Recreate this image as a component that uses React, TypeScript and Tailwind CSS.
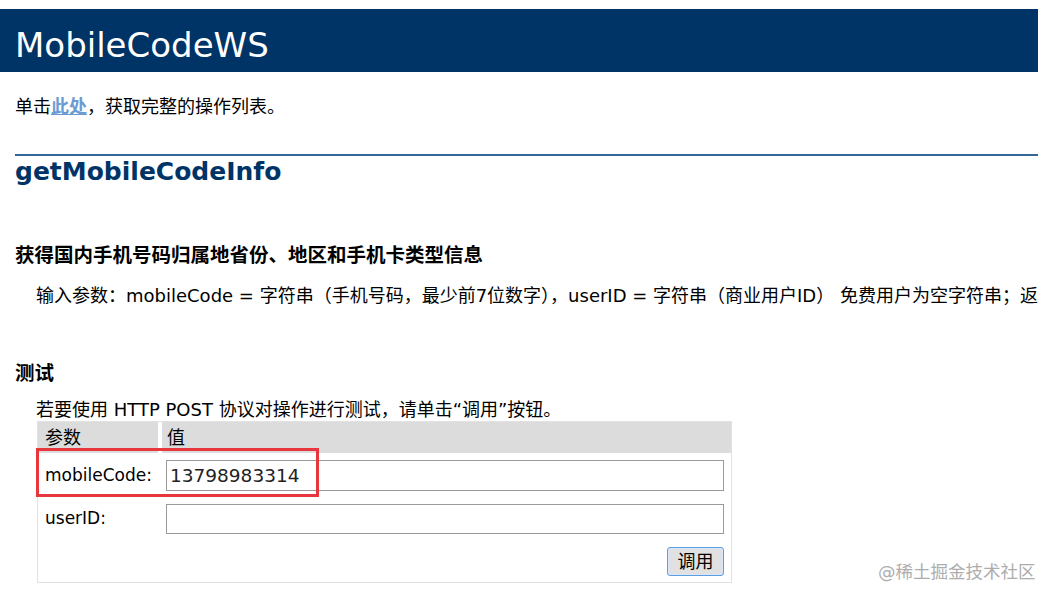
export default function App() {
  return (
    <div className="relative w-[1038px] overflow-hidden bg-white pt-[9px] pb-[19px] font-['DejaVu_Sans','Noto_Sans_CJK_SC',sans-serif] text-black">
      <div className="h-[63px] bg-[#003366] pl-[15px] pt-[19px] text-[34px] leading-[34px] text-white">MobileCodeWS</div>

      <p className="mt-[23px] pl-[15px] text-[18px] leading-[24px]">
        单击<a className="font-bold text-[#6b9bd2] underline">此处</a>，获取完整的操作列表。
      </p>

      <div className="ml-[15px] mt-[35px] h-[2px] bg-[#336699]" />
      <h2 className="mt-[1px] pl-[15px] text-[25px] font-bold leading-[30px] text-[#003366]">getMobileCodeInfo</h2>

      <h3 className="mt-[56px] pl-[15px] text-[19.5px] font-bold leading-[26px]">获得国内手机号码归属地省份、地区和手机卡类型信息</h3>
      <p className="mt-[15px] whitespace-nowrap pl-[36px] text-[18px] leading-[24px]">
        输入参数：mobileCode = 字符串（手机号码，最少前7位数字），userID = 字符串（商业用户ID） 免费用户为空字符串；返回数据：字符串（手机号码：省份 城市 手机卡类型）。
      </p>

      <h3 className="mt-[53px] pl-[15px] text-[19.5px] font-bold leading-[26px]">测试</h3>
      <p className="mt-[12px] pl-[36px] text-[18px] leading-[22px]">若要使用 HTTP POST 协议对操作进行测试，请单击“调用”按钮。</p>

      <div className="relative ml-[37px] w-[695px] border border-[#e2e2e2]">
        <div className="flex h-[31px] gap-[4px] text-[18px]">
          <div className="flex w-[120px] items-center bg-[#dcdcdc] pl-[7px]">参数</div>
          <div className="flex flex-1 items-center bg-[#dcdcdc] pl-[5px]">值</div>
        </div>
        <div className="grid grid-cols-[120px_1fr] items-center gap-x-[4px] gap-y-[13px] pt-[7px] pb-[6px] text-[17px]">
          <div className="pl-[7px]">mobileCode:</div>
          <div className="pl-[4px] pr-[7px]">
            <input
              className="h-[31px] w-full border border-[#9a9a9a] px-[3px] text-[18.5px] text-[#222] outline-none"
              defaultValue="13798983314"
            />
          </div>
          <div className="pl-[7px]">userID:</div>
          <div className="pl-[4px] pr-[7px]">
            <input className="h-[30px] w-full border border-[#9a9a9a] px-[3px] text-[18.5px] outline-none" />
          </div>
          <div />
          <div className="flex justify-end pr-[7px]">
            <button className="h-[29px] w-[57px] rounded-[3px] border border-[#5f9de2] bg-[#e1e1e1] text-[18px] leading-none shadow-[inset_0_0_0_1px_#d6e8fa]">
              调用
            </button>
          </div>
        </div>
        <div className="absolute left-[-2px] top-[26px] h-[49px] w-[283px] border-[3px] border-[#e8373c]" />
      </div>

      <div className="absolute left-[878px] top-[560px] whitespace-nowrap text-[17.5px] leading-[24px] text-[#adadad]">@稀土掘金技术社区</div>
    </div>
  );
}
